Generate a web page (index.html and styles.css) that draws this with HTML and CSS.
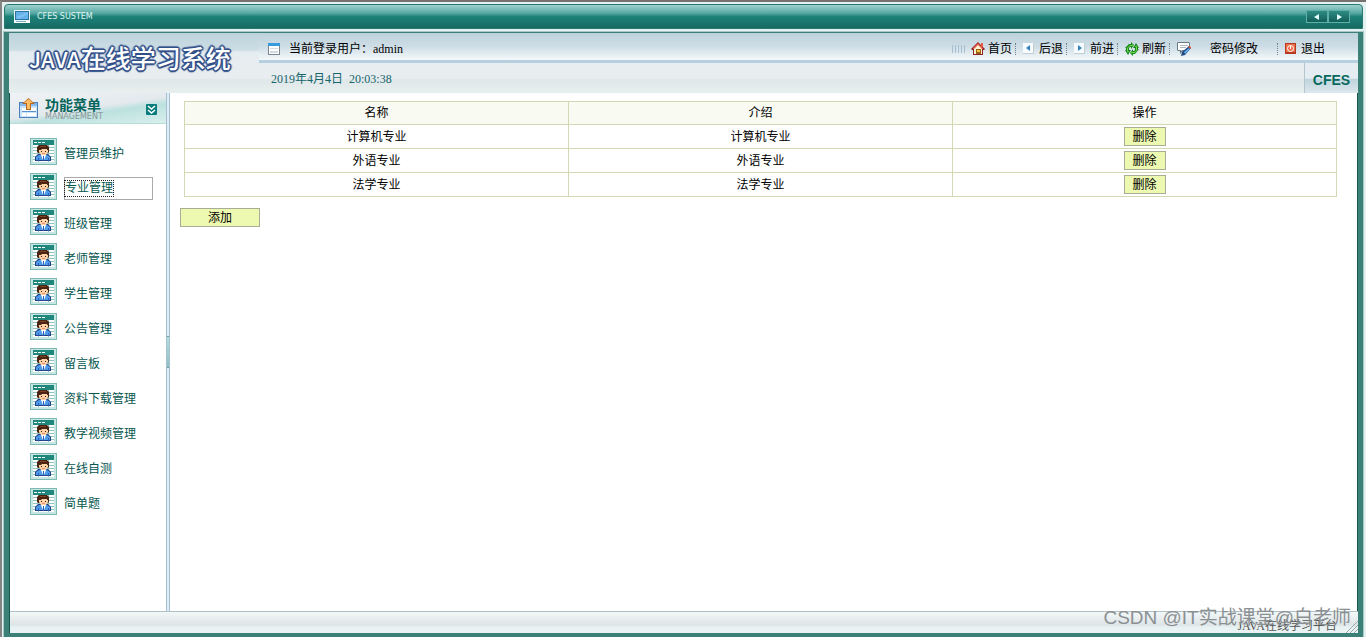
FILE: index.html
```html
<!DOCTYPE html>
<html lang="zh-CN">
<head>
<meta charset="utf-8">
<title>JAVA在线学习系统</title>
<link rel="stylesheet" href="styles.css">
</head>
<body>
<svg class="defs" aria-hidden="true">
  <symbol id="user" viewBox="0 0 27 27">
    <path fill="#7fb9b4" d="M0 0h27v27H0z"/><path fill="#c5e6e2" d="M1 1h25v25H1z"/>
    <path fill="#fff" d="M3 7h21v17H3z"/><path fill="#1f877c" d="M3 2h21v5H3z"/>
    <path fill="#fff" d="M4 4h3v1H4zM8 4h3v1H8zM12 4h3v1h-3z"/>
    <path stroke="#8fc3bf" d="M3 9.500h21M3 12.500h21M3 15.500h21M3 18.500h21M3 21.500h21M8.500 7v17M18.500 7v17"/>
    <path fill="#243e86" d="M5 23v-4l3-3h10l3 3v4z"/><path fill="#4d9be8" d="M6 22v-3l3-2h8l3 2v3z"/>
    <path fill="#fff" d="M11 17h5l-2 5h-1z"/><path fill="#315fb5" d="M13 18h1v5h-1zM8 20h1v3H8zM18 20h1v3h-1z"/>
    <path fill="#4b2413" d="M9 7h8l2 2v5l-1 1H8l-1-1V9z"/><path fill="#7c4322" d="M10 8h6v1h-6z"/><path fill="#ffd2a5" d="M9 12h2l1-1h5v1h1v2l-2 3h-5l-2-3z"/>
    <path fill="#3b1c12" d="M11 13h1v1h-1zM15 13h1v1h-1z"/><path fill="#e79075" d="M12 15h3v1h-3z"/>
  </symbol>
</svg>
<div class="window">
  <header class="titlebar">
    <svg class="monitor" viewBox="0 0 16 13"><path fill="#e9f6ff" d="M0 0h16v11H0z"/><path fill="#2e75a3" d="M1 1h14v9H1z"/><path fill="#64b2ea" d="M2 2h12v7H2z"/><path fill="#7dc0f1" d="M2 7l12-5v2L5 9z"/><path fill="#fff" d="M0 11h16v2H0z"/><path fill="#7faeb6" d="M2 11h10v1H2z"/></svg>
    <span class="pixel">CFES SUSTEM</span>
    <div class="arrows">
      <button aria-label="上一页"><svg viewBox="0 0 6 6"><path d="M5 0v6L0 3z"/></svg></button>
      <button aria-label="下一页"><svg viewBox="0 0 6 6"><path d="M1 0v6l5-3z"/></svg></button>
    </div>
  </header>
  <div class="frame">
    <div class="head">
      <h1 class="logo"><span class="java">JAVA</span>在线学习系统</h1>
      <div class="head-right">
        <div class="toolbar">
          <svg class="win" viewBox="0 0 12 12"><path fill="#7b8790" d="M0 0h12v12H0z"/><path fill="#fff" d="M1 3h10v8H1z"/><path fill="#359bdc" d="M0 0h12v3H0z"/><path fill="#d4dbe0" d="M2 5h8v1H2zM2 8h8v2H2z"/></svg>
          <span class="who">当前登录用户：admin</span>
          <nav class="tools">
            <svg class="grip" viewBox="0 0 14 8"><path stroke="#a5bfd0" d="M.5 0v8M3.500 0v8M6.500 0v8M9.500 0v8M12.500 0v8"/></svg>
            <a href="#"><svg class="i14" viewBox="0 0 14 14"><path fill="#8f2323" d="M7 0l7 7-1 1h-1v5H2V8H1L0 7z"/><path fill="#e4574a" d="M7 1l5 5v1H2V6zM10 1h2v4h-2z"/><path fill="#fff2cf" d="M7 3l4 4v5H3V7z"/><path fill="#99631e" d="M5 7h5v5H5z"/><path fill="#f3c53d" d="M6 8h3v2H6z"/></svg>首页</a><i></i>
            <a href="#" class="nav"><svg class="i11" viewBox="0 0 11 11"><path fill="#c0cdd5" d="M0 0h11v11H0z"/><path fill="#f8fcff" d="M0 0h10v10H0z"/><path fill="#3384bd" d="M7 2v6L3 5z"/></svg>后退</a><i></i>
            <a href="#" class="nav"><svg class="i11" viewBox="0 0 11 11"><path fill="#c0cdd5" d="M0 0h11v11H0z"/><path fill="#f8fcff" d="M0 0h10v10H0z"/><path fill="#3384bd" d="M4 2v6l4-3z"/></svg>前进</a><i></i>
            <a href="#"><svg class="i14" viewBox="0 0 14 14"><path fill="#168321" d="M0 6l4-4h2V0l3 3-3 4V5H5L4 6v2h2l-3 5-3-5h1V6zM14 7l-4 5H8v2l-3-3 3-4v2h1l1-1V6H8l3-5 3 5h-1v1z"/><path fill="#72df42" d="M2 6l3-3h2V2l1 1-1 2V4H5L3 6v3h1l-1 2-1-2zM12 8l-2 3H7v1l-1-1 1-2v1h3l1-2V5h-1l1-2 1 2z"/></svg>刷新</a><i></i>
            <a href="#" class="pass"><svg class="i14" viewBox="0 0 14 14"><path fill="#687987" d="M1 0h11l1 1v6l-2 2H6l-3 3V9H1L0 8V1z"/><path fill="#fff" d="M1 1h11v6l-1 1H5l-1 1V8H1z"/><path fill="#aeb7bf" d="M3 3h8v1H3zM3 5h6v1H3z"/><path fill="#234984" d="M5 10l7-6 2 2-6 7-4 1z"/><path fill="#60aee9" d="M7 10l5-4 1 1-5 5z"/><path fill="#e35137" d="M12 4l2 1v2l-3-2z"/></svg>密码修改</a><i></i>
            <a href="#" class="exit"><svg class="i11" viewBox="0 0 11 11"><path fill="#b63922" d="M0 0h11v11H0z"/><path fill="#ed704c" d="M1 1h9v8H1z"/><circle cx="5.500" cy="5.500" r="3" fill="none" stroke="#fff"/><path fill="#fff" d="M5 3h1v3H5z"/></svg>退出</a>
          </nav>
        </div>
        <div class="subbar"><time>2019年4月4日&nbsp; 20:03:38</time><strong>CFES</strong></div>
      </div>
    </div>
    <div class="body">
      <aside>
        <div class="menu-head">
          <svg class="menu-icon" viewBox="0 0 20 20"><path fill="#4c7ebb" d="M0 4h19v16H0z"/><path fill="#c8e3fb" d="M1 7h17v12H1z"/><path fill="#87bbed" d="M1 5h17v3H1z"/><path fill="#fff" d="M3 10h7v3H3zM11 10h6v3h-6zM3 15h4v3H3zM8 15h9v3H8z"/><path fill="#5b91cf" d="M3 13h14v1H3z"/><path fill="#b96820" d="M9.500 0L16 6h-4v6H7V6H3z"/><path fill="#ffbd62" d="M9.500 1L14 5h-3v6H8V5H5z"/></svg>
          <div class="menu-title"><h2>功能菜单</h2><span class="pixel">MANAGEMENT</span></div>
          <button class="fold" aria-label="收起菜单"><svg viewBox="0 0 11 11"><path fill="none" stroke="#fff" stroke-width="1.500" d="M2 2l3.500 3L9 2M2 6l3.500 3L9 6"/></svg></button>
        </div>
        <ul>
          <li><svg><use href="#user"/></svg><a href="#">管理员维护</a></li>
          <li class="active"><svg><use href="#user"/></svg><a href="#"><span>专业管理</span></a></li>
          <li><svg><use href="#user"/></svg><a href="#">班级管理</a></li>
          <li><svg><use href="#user"/></svg><a href="#">老师管理</a></li>
          <li><svg><use href="#user"/></svg><a href="#">学生管理</a></li>
          <li><svg><use href="#user"/></svg><a href="#">公告管理</a></li>
          <li><svg><use href="#user"/></svg><a href="#">留言板</a></li>
          <li><svg><use href="#user"/></svg><a href="#">资料下载管理</a></li>
          <li><svg><use href="#user"/></svg><a href="#">教学视频管理</a></li>
          <li><svg><use href="#user"/></svg><a href="#">在线自测</a></li>
          <li><svg><use href="#user"/></svg><a href="#">简单题</a></li>
        </ul>
      </aside>
      <div class="divider"><span></span></div>
      <main>
        <table>
          <thead><tr><th>名称</th><th>介绍</th><th>操作</th></tr></thead>
          <tbody>
            <tr><td>计算机专业</td><td>计算机专业</td><td><button class="btn">删除</button></td></tr>
            <tr><td>外语专业</td><td>外语专业</td><td><button class="btn">删除</button></td></tr>
            <tr><td>法学专业</td><td>法学专业</td><td><button class="btn">删除</button></td></tr>
          </tbody>
        </table>
        <button class="btn add">添加</button>
      </main>
    </div>
    <footer>JAVA在线学习平台<svg class="resize" viewBox="0 0 12 12"><path stroke="#9aa8ac" d="M0 12L12 0M4 12l8-8M8 12l4-4"/></svg></footer>
  </div>
</div>
<div class="mark">CSDN @IT实战课堂@白老师</div>
</body>
</html>
```

FILE: styles.css
```css
* { box-sizing: border-box; }
body {
  margin: 0;
  font: 12px/16px "Liberation Serif", "Noto Sans CJK SC", sans-serif;
  color: #000;
  background: #e4f1f1;
}
a { color: inherit; text-decoration: none; }
button { font: inherit; padding: 0; }
svg { display: block; flex: none; }
.defs { position: absolute; width: 0; height: 0; }
h1, h2, ul { margin: 0; padding: 0; }

.window {
  display: flex;
  flex-direction: column;
  min-height: 100vh;
  padding: 2px 3px 0 2px;
  border-top: 2px solid #777170;
  border-left: 2px solid #858585;
}
.titlebar {
  display: flex;
  align-items: center;
  height: 25px;
  padding: 0 12px 0 9px;
  border: 1px solid #2a7770;
  border-radius: 4px 4px 0 0;
  background: linear-gradient(#9fd0ce, #58aaa4 35%, #1d827a 50%, #166a63);
}
.monitor { width: 16px; height: 13px; margin-right: 7px; }
.pixel { font: 8px/8px "DejaVu Sans", sans-serif; }
.titlebar .pixel { color: #dff5f2; }
.arrows { display: flex; margin-left: auto; }
.arrows button {
  width: 22px;
  height: 13px;
  border: 1px solid #5faea7;
  background: linear-gradient(#2e8b83, #126059);
  display: grid;
  place-items: center;
}
.arrows svg { width: 6px; height: 6px; fill: #e6ffff; }

.frame {
  flex: 1;
  display: flex;
  flex-direction: column;
  margin-top: 3px;
  border: 5px solid #3b8177;
  border-top: 1px solid #3d8078;
  border-bottom-width: 4px;
  box-shadow: inset 1px 0 #17594f, inset -1px 0 #17594f;
  outline: 1px solid #a9c9c8;
  background: #fff;
}
.head {
  display: flex;
  height: 60px;
  background: linear-gradient(#bdd3dd, #cddde4 28%, #e5edf0 32%, #e9edef 75%, #dfe7e8 78%, #e8efef);
}
.logo {
  width: 250px;
  padding: 7px 0 0 20px;
  font: 500 25px/34px "Noto Sans CJK SC", sans-serif;
  color: #fff;
  white-space: nowrap;
  text-shadow: 1px 1px #304e88, -1px -1px #304e88, 1px -1px #304e88, -1px 1px #304e88, 0 2px 1px #304e88, 2px 0 1px #5870a0, -2px 0 1px #5870a0, 0 -2px 1px #5870a0;
}
.java { font-size: 22px; }
.head-right { flex: 1; display: flex; flex-direction: column; }
.toolbar {
  display: flex;
  align-items: center;
  height: 30px;
  padding: 4px 33px 0 9px;
  border-bottom: 3px solid #b6d0df;
  background: linear-gradient(#bdd1dc, #cedde5 50%, #f4f9fb);
}
.win { width: 12px; height: 12px; margin-right: 9px; }
.tools { display: flex; align-items: center; margin-left: auto; }
.tools a { display: flex; align-items: center; gap: 3px; }
.tools i { width: 1px; height: 12px; margin: 0 7px 0 3px; border-left: 1px dotted #71818b; }
.tools .nav, .tools .exit { gap: 5px; }
.tools .pass { gap: 19px; margin-right: 16px; }
.grip { width: 14px; height: 8px; margin-right: 5px; }
.i14 { width: 14px; height: 14px; }
.i11 { width: 11px; height: 11px; }
.subbar {
  flex: 1;
  display: flex;
  align-items: center;
  justify-content: space-between;
  padding-left: 12px;
  color: #16656c;
}
.subbar time { padding-top: 2px; }
.subbar strong {
  display: grid;
  place-items: center;
  align-self: stretch;
  width: 54px;
  padding-top: 4px;
  border-left: 1px solid #b4c5cd;
  background: linear-gradient(#e5edf2 50%, #c0d5de 55%, #dce8ed);
  font: bold 14px/16px "Liberation Sans", sans-serif;
  color: #08695f;
}

.body { flex: 1; display: flex; }
aside { width: 157px; padding-left: 1px; }
.menu-head {
  display: flex;
  align-items: center;
  height: 31px;
  padding: 0 9px;
  border-bottom: 1px solid #b5ddd9;
  background: linear-gradient(172deg, #f0f3f5, #e3e9ed 50%, #bce1df 62%, #d8efed);
}
.menu-icon { width: 20px; height: 20px; margin-right: 6px; }
.menu-title { flex: 1; padding-top: 2px; }
h2 { font: bold 14px/16px "Liberation Sans", "Noto Sans CJK SC", sans-serif; color: #07655b; }
.menu-title .pixel { display: block; color: #8c9696; }
.fold { width: 11px; height: 11px; margin-top: 2px; border: 0; border-radius: 1px; background: #087b7c; }
ul { list-style: none; padding: 14px 13px 0 20px; }
li { display: flex; align-items: center; gap: 7px; height: 27px; margin-bottom: 8px; color: #07564f; }
li svg { width: 27px; height: 27px; }
li a { flex: 1; padding-top: 4px; }
.active a { height: 23px; margin-top: 3px; padding: 3px 0 0; border: 1px solid #aaa; }
.active span { display: block; width: max-content; line-height: 15px; outline: 1px dotted #222; }
.divider {
  width: 4px;
  display: flex;
  align-items: center;
  border: solid #a5c1d0;
  border-width: 0 1px;
  background: #dcedf8;
}
.divider span {
  width: 2px;
  height: 32px;
  border: solid #6c9fa8;
  border-width: 1px 0;
  background: linear-gradient(#b9dde2, #8fc0c4);
}
main { flex: 1; padding: 8px 21px 0 10px; }
table { width: calc(100% - 4px); margin-left: 4px; border-collapse: collapse; table-layout: fixed; text-align: center; }
th, td { height: 24px; padding: 0; border: 1px solid #d5d8b4; font-weight: normal; }
th { height: 23px; background: #f9faf2; }
.btn {
  display: block;
  width: 42px;
  height: 19px;
  margin: 0 auto;
  border: 1px solid #a8ad94;
  background: #edf8b0;
  line-height: 16px;
}
.add { width: 80px; margin: 11px 0 0; }
footer {
  display: flex;
  align-items: end;
  justify-content: end;
  gap: 9px;
  height: 22px;
  margin-left: 1px;
  border-top: 1px solid #aebfc5;
  background: linear-gradient(#f2f7f7, #e4eaec 45%, #dde5e8 60%, #eaf3f3 75%);
  line-height: 14px;
  color: #555;
}
.resize { width: 12px; height: 12px; }
.mark {
  position: absolute;
  right: 15px;
  bottom: 7px;
  font: 19px/24px "Liberation Sans", "Noto Sans CJK SC", sans-serif;
  color: #8b9093;
}
```
